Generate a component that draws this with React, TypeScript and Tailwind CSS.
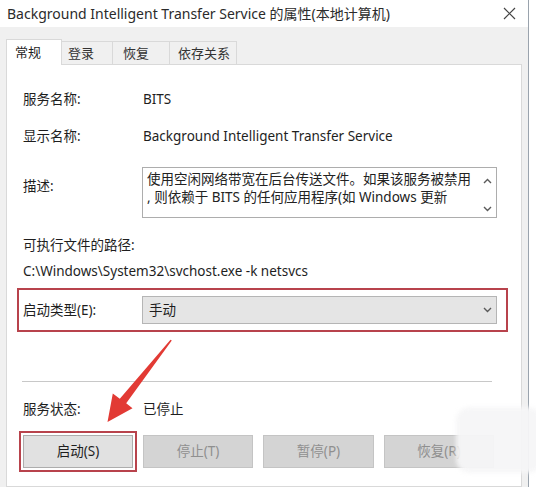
import React from "react";

const cjk = "font-['Noto_Sans','Noto_Sans_CJK_SC',sans-serif]";

function Row({ label, children }: { label: string; children: React.ReactNode }) {
  return (
    <div className="flex items-center h-[20px]">
      <span className="w-[120px] shrink-0">{label}</span>
      <span>{children}</span>
    </div>
  );
}

function Chevron({ up }: { up?: boolean }) {
  return (
    <svg width="9" height="6" viewBox="0 0 9 6" className="block">
      <path
        d={up ? "M1 5 L4.5 1.5 L8 5" : "M1 1 L4.5 4.5 L8 1"}
        fill="none"
        stroke="#5a5a5a"
        strokeWidth="1.4"
      />
    </svg>
  );
}

export default function App() {
  return (
    <div className={`relative w-[536px] h-[487px] overflow-hidden bg-white text-[13.5px] text-[#1e1e1e] ${cjk}`}>
      <div className="w-[529px] h-full flex flex-col border-r border-[#9aa3ad] bg-[#f0f0f0]">
        {/* title bar */}
        <div className="h-[27px] shrink-0 bg-white flex items-center justify-between pl-[7px] pr-[12px]">
          <span className="text-[14px] text-[#2b2b2b]">
            Background Intelligent Transfer Service 的属性(本地计算机)
          </span>
          <svg width="13" height="13" viewBox="0 0 13 13">
            <path d="M1 1 L12 12 M12 1 L1 12" stroke="#444" strokeWidth="1.2" />
          </svg>
        </div>

        {/* tabs */}
        <div className="flex items-end pl-[6px] pt-[11px] h-[37px] shrink-0 text-[13px]">
          <div className="w-[56px] h-[26px] -mb-px relative z-10 bg-white border border-b-0 border-[#d9d9d9] pl-[8px] pt-[3px]">
            常规
          </div>
          <div className="w-[51px] h-[23px] bg-[#f0f0f0] border border-l-0 border-b-0 border-[#d9d9d9] pl-[6px] pt-[2px] text-[#333]">
            登录
          </div>
          <div className="w-[57px] h-[23px] bg-[#f0f0f0] border border-l-0 border-b-0 border-[#d9d9d9] pl-[10px] pt-[2px] text-[#333]">
            恢复
          </div>
          <div className="w-[67px] h-[23px] bg-[#f0f0f0] border border-l-0 border-b-0 border-[#d9d9d9] pl-[8px] pt-[2px] text-[#333]">
            依存关系
          </div>
        </div>

        {/* panel */}
        <div className="ml-[6px] w-[516px] flex-1 bg-white border border-[#d9d9d9] pl-[16px] pt-[24px]">
          <Row label="服务名称:">BITS</Row>
          <div className="mt-[17px]">
            <Row label="显示名称:">Background Intelligent Transfer Service</Row>
          </div>

          <div className="mt-[21px] flex items-start">
            <span className="w-[119px] shrink-0 mt-[9px]">描述:</span>
            <div className="w-[355px] h-[51px] border border-[#adadad] flex justify-between pl-[4px] pt-[2px] leading-[18px] text-[#222]">
              <div>
                <div>使用空闲网络带宽在后台传送文件。如果该服务被禁用</div>
                <div>, 则依赖于 BITS 的任何应用程序(如 Windows 更新</div>
              </div>
              <div className="flex flex-col justify-between items-center w-[16px] pt-[8px] pb-[5px] mr-[1px]">
                <Chevron up />
                <Chevron />
              </div>
            </div>
          </div>

          <div className="mt-[17px] h-[20px] flex items-center">可执行文件的路径:</div>
          <div className="mt-[6px] h-[20px] flex items-center">C:\Windows\System32\svchost.exe -k netsvcs</div>

          <div className="mt-[7px] -ml-[6px] w-[491px] border-2 border-[#b8434c] pl-[4px] pr-[9px] py-[6px] flex items-center">
            <span className="w-[119px] shrink-0">启动类型(E):</span>
            <div className="flex-1 h-[28px] bg-[#e5e5e5] border border-[#b5b5b5] flex items-center justify-between pl-[6px] pr-[4px]">
              <span>手动</span>
              <Chevron />
            </div>
          </div>

          <div className="mt-[49px] -ml-[1px] w-[470px] h-px bg-[#c8c8c8]" />

          <div className="mt-[17px]">
            <Row label="服务状态:">已停止</Row>
          </div>

          <div className="mt-[16px] flex gap-[10px]">
            <div className="w-[110px] h-[33px] bg-[#e1e1e1] border border-[#adadad] flex items-center justify-center outline-2 outline-[#b8434c] outline-offset-[2px]">
              启动(S)
            </div>
            <div className="w-[110px] h-[33px] bg-[#d4d4d4] border border-[#c4c4c4] flex items-center justify-center text-[#8f8f8f]">
              停止(T)
            </div>
            <div className="w-[111px] h-[33px] bg-[#d4d4d4] border border-[#c4c4c4] flex items-center justify-center text-[#8f8f8f]">
              暂停(P)
            </div>
            <div className="w-[110px] h-[33px] bg-[#d4d4d4] border border-[#c4c4c4] flex items-center justify-center text-[#8f8f8f]">
              恢复(R)
            </div>
          </div>
        </div>
      </div>

      {/* red arrow annotation */}
      <svg className="absolute left-0 top-0 pointer-events-none" width="536" height="487">
        <polygon
          points="170.5,339.7 171.8,340.5 126.2,403.3 132.5,408.3 107.5,422 112.8,393.5 119.8,398.7"
          fill="#e23a34"
        />
      </svg>

      {/* watermark patch */}
      <div className="absolute left-[456px] top-[407px] w-[86px] h-[66px] rounded-[14px] bg-[#f6f6f7] opacity-95 blur-[2px]" />
    </div>
  );
}
